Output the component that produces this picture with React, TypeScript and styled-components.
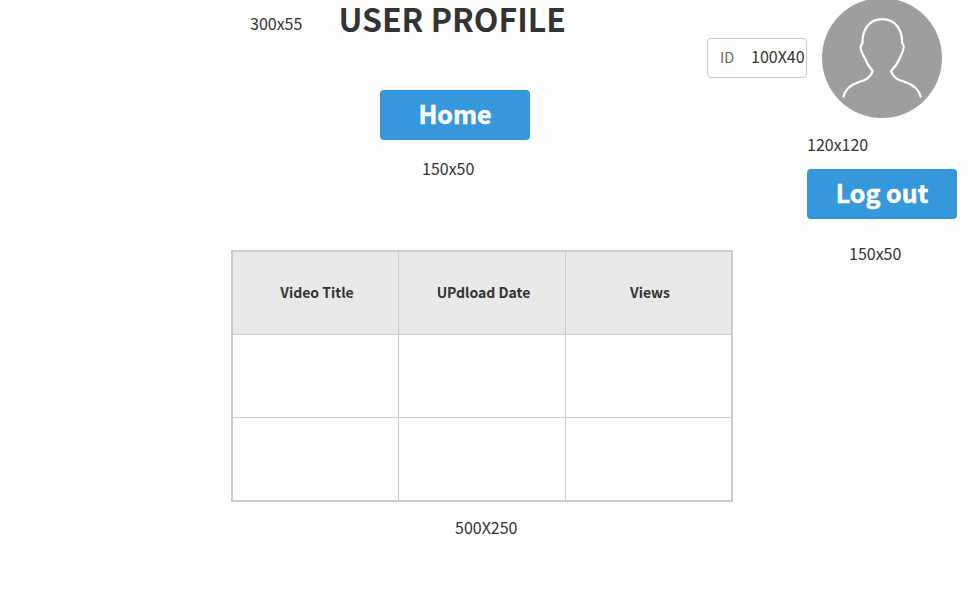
import React from "react";
import styled, { createGlobalStyle } from "styled-components";

const GlobalStyle = createGlobalStyle`
  * { box-sizing: border-box; }
  body {
    margin: 0;
    background: #fefefe;
    color: #333;
    font-family: "Noto Sans CJK SC", "Noto Sans", sans-serif;
  }
`;

const Page = styled.div`
  display: flex;
  width: 973px;
  height: 596px;
`;

const Main = styled.main`
  display: flex;
  flex-direction: column;
  width: 707px;
  padding-left: 231px;
`;

const Header = styled.header`
  display: flex;
  align-items: flex-start;
  height: 90px;
  padding-left: 19px;
`;

const SizeLabel = styled.span<{ $top?: number; $left?: number }>`
  display: block;
  flex: none;
  font-size: 16px;
  line-height: 24px;
  white-space: nowrap;
  margin-top: ${(p) => p.$top ?? 0}px;
  margin-left: ${(p) => p.$left ?? 0}px;
`;

const Title = styled.h1`
  margin: 0 0 0 36px;
  font-size: 32px;
  font-weight: 700;
  line-height: 36px;
  white-space: nowrap;
`;

const Button = styled.button<{ $top?: number; $left?: number }>`
  display: flex;
  flex: none;
  align-items: center;
  justify-content: center;
  width: 150px;
  height: 50px;
  margin: ${(p) => p.$top ?? 0}px 0 0 ${(p) => p.$left ?? 0}px;
  padding: 0 0 4px;
  border: 0;
  border-radius: 4px;
  background: #3598dc;
  color: #fff;
  font: 700 25px/36px "Noto Sans CJK SC", "Noto Sans", sans-serif;
  -webkit-text-stroke: 0.5px #fff;
`;

const Table = styled.div`
  display: grid;
  flex: none;
  grid-template-columns: 166px 167px 165px;
  grid-template-rows: 83px 83px 82px;
  width: 502px;
  height: 252px;
  margin-top: 70px;
  border: 2px solid #ccc;
`;

const Cell = styled.div<{ $head?: boolean }>`
  display: flex;
  align-items: center;
  justify-content: center;
  padding: 0 0 2px 3px;
  background: ${(p) => (p.$head ? "#e9e9e9" : "#fefefe")};
  border-right: 1px solid #ccc;
  border-bottom: 1px solid #ccc;
  font-size: 14px;
  font-weight: 700;
  line-height: 20px;
  &:nth-child(3n) { border-right: 0; }
  &:nth-child(n + 7) { border-bottom: 0; }
`;

const Aside = styled.aside`
  display: flex;
  flex-direction: column;
  width: 250px;
`;

const Account = styled.div`
  display: flex;
  align-items: flex-start;
  gap: 15px;
  height: 118px;
`;

const IdField = styled.div`
  display: flex;
  flex: none;
  width: 100px;
  height: 40px;
  margin-top: 38px;
  padding-left: 12px;
  border: 1px solid #ccc;
  border-radius: 4px;
`;

const IdName = styled.span`
  width: 31px;
  margin-top: 6px;
  color: #666;
  font-size: 14.3px;
  line-height: 24px;
`;

const Avatar = styled.svg`
  display: block;
  flex: none;
  width: 120px;
  height: 120px;
  margin-top: -2px;
`;

const columns = ["Video Title", "UPdload Date", "Views"];

export default function App() {
  return (
    <Page>
      <GlobalStyle />
      <Main>
        <Header>
          <SizeLabel $top={11}>300x55</SizeLabel>
          <Title>USER PROFILE</Title>
        </Header>
        <Button $left={149}>Home</Button>
        <SizeLabel $top={16} $left={191}>150x50</SizeLabel>
        <Table>
          {columns.map((name) => <Cell key={name} $head>{name}</Cell>)}
          {Array.from({ length: 6 }, (_, i) => <Cell key={i} />)}
        </Table>
        <SizeLabel $top={13} $left={224}>500X250</SizeLabel>
      </Main>
      <Aside>
        <Account>
          <IdField>
            <IdName>ID</IdName>
            <SizeLabel $top={5}>100X40</SizeLabel>
          </IdField>
          <Avatar viewBox="0 0 120 120">
            <circle cx="60" cy="60" r="60" fill="#9e9e9e" />
            <path
              d="M21.2 99.400C23 91.500 29 86.500 37 84C44 82.500 49 79 50.700 73C46.500 68.500 44.500 64.500 43 60.500C41 56.500 38.700 53.500 38.700 49.500C38.700 47.300 39.500 46.300 40.500 45C40 32 47 21.200 60.300 21.200C73.500 21.200 80.500 32 80.200 45C81.200 46.300 82 47.300 81.700 49.500C81.300 53.500 79.300 56.500 77.600 60.500C76 64.500 73.700 68.500 69 73C70.700 79 76 82.500 83 84C91 86.500 97 91.500 98.900 99.400"
              fill="none"
              stroke="#fff"
              strokeWidth="2.200"
              strokeLinejoin="round"
            />
          </Avatar>
        </Account>
        <SizeLabel $top={14} $left={100}>120x120</SizeLabel>
        <Button $top={13} $left={100}>Log out</Button>
        <SizeLabel $top={22} $left={142}>150x50</SizeLabel>
      </Aside>
    </Page>
  );
}
